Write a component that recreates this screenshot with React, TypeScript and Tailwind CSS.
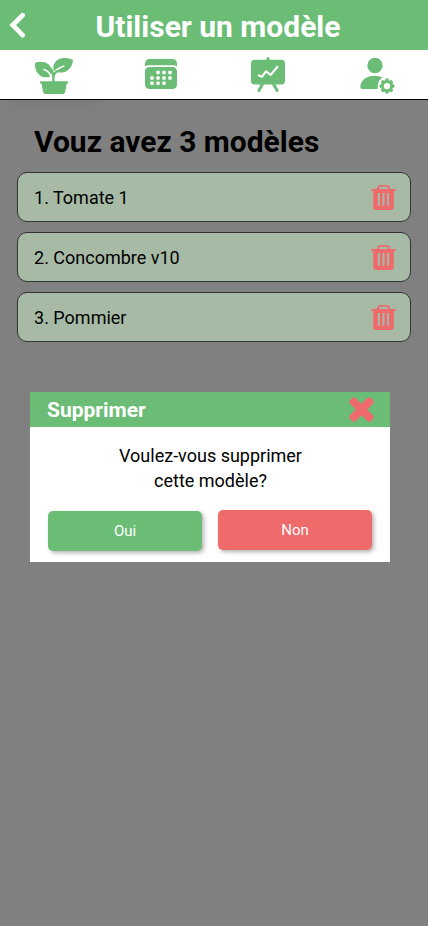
const GREEN = '#6bbd76';
const RED = '#ef6a6a';

function BackIcon() {
  return (
    <svg width="18" height="26" viewBox="0 0 18 26" fill="none" stroke="white" strokeWidth="4.8" strokeLinecap="round" strokeLinejoin="miter">
      <path d="M14.600 3.200 4.800 13.100 14.600 23.200" />
    </svg>
  );
}

function PlantIcon() {
  return (
    <svg width="38" height="38" viewBox="0 0 38 38">
      <path d="M6 25.300H32Q33.200 25.300 33.200 26.500T32 27.800H31.600L30.300 35.200Q29.800 38 27.300 38H10.900Q8.400 38 7.900 35.200L6.600 27.800H6Q5 27.800 5 26.500T6 25.300Z" fill={GREEN} />
      <path d="M0 8.500C0 6 1.500 6.300 3.500 6C10 5.200 16 8 16.600 14.500C16.900 17 16.500 19.500 15 20.700C12 21.500 8 21.900 5 19.500C1.500 17 0 13 0 8.500Z" fill={GREEN} />
      <path d="M18.700 14.500C16.800 7.500 22.500 2 29 2C32.500 2 34.500 2.600 37 3.400Q38.300 3.900 37.900 5.500C36.500 12 32.500 16.200 27 16.400C23.500 16.500 21.500 16.100 20 15.400Z" fill={GREEN} />
      <path d="M9 13.500C12.500 14.800 15 17.300 16 20.700M28.700 10.200C24.500 11.500 21.300 13.500 19.700 16.500" fill="none" stroke="white" strokeWidth="1.700" strokeLinecap="round" />
      <path d="M18.400 26V22C18.400 18 17.400 14.800 16 12.500M18.400 26V21.500C18.400 18.500 20.300 16.200 23 14.800" fill="none" stroke={GREEN} strokeWidth="2.400" />
    </svg>
  );
}

function CalendarIcon() {
  const dots = [[13, 13.500], [19, 13.500], [25, 13.500], [7, 19], [13, 19], [19, 19], [25, 19], [7, 24.200], [13, 24.200], [19, 24.200]];
  return (
    <svg width="32" height="30" viewBox="0 0 32 30" fill={GREEN}>
      <path d="M0 7.500V5Q0 0 5 0H27Q32 0 32 5V7.500Q30.500 6.200 28 6.200H4Q1.500 6.200 0 7.500Z" />
      <rect y="8" width="32" height="22" rx="4.500" />
      {dots.map(([x, y]) => (
        <rect key={`${x}-${y}`} x={x - 1.700} y={y - 1.700} width="3.400" height="3.400" rx="0.900" fill="white" />
      ))}
    </svg>
  );
}

function BoardIcon() {
  return (
    <svg width="34" height="36" viewBox="0 0 34 36" fill="none" strokeLinecap="round" strokeLinejoin="round">
      <rect y="2.800" width="34" height="24.700" rx="3.500" fill={GREEN} />
      <path d="M17 1.500V4M11.500 27 7.900 33.500M22.500 27 26.100 33.500" stroke={GREEN} strokeWidth="3" />
      <path d="M7.900 18.500 11 19.700 15 14.300 19.700 17.900 26.400 9.900" stroke="white" strokeWidth="2.200" />
    </svg>
  );
}

function UserSettingsIcon() {
  const teeth = [0, 45, 90, 135];
  return (
    <svg width="36" height="38" viewBox="0 0 36 38" fill={GREEN}>
      <circle cx="15" cy="8.500" r="7.700" />
      <path d="M0.300 30C0.300 24 6 18.800 14.500 18.800Q19.500 18.800 22.500 20.500Q17 24 17.700 32H2.500Q0.300 32 0.300 30Z" />
      {teeth.map((a) => (
        <rect key={a} x="25.300" y="21.600" width="3.400" height="15" rx="0.800" transform={`rotate(${a} 27 29.100)`} />
      ))}
      <circle cx="27" cy="29.100" r="6.200" />
      <circle cx="27" cy="29.100" r="3.200" fill="white" />
    </svg>
  );
}

function TrashIcon() {
  return (
    <svg className="mt-px" width="25" height="25" viewBox="0 0 25 25" fill="none">
      <path d="M0.200 4H24.800V6.100H22.800V22Q22.800 25 20 25H5Q2.200 25 2.200 22V6.100H0.200Z" fill={RED} />
      <path d="M7 5V3.500Q7 0.900 9.500 0.900H15.500Q18 0.900 18 3.500V5" stroke={RED} strokeWidth="1.800" />
      <path d="M7.900 8V20.800M17.100 8V20.800M12.500 8V20.800" stroke="#a6baa6" strokeWidth="2" />
    </svg>
  );
}

function CloseIcon() {
  return (
    <svg width="26" height="26" viewBox="0 0 26 26" fill={RED}>
      <rect x="-2.200" y="8.500" width="29.400" height="8" rx="2.500" transform="rotate(45 12.500 12.500)" />
      <rect x="-2.200" y="8.500" width="29.400" height="8" rx="2.500" transform="rotate(-45 12.500 12.500)" />
    </svg>
  );
}

const models = ['Tomate 1', 'Concombre v10', 'Pommier'];

export default function App() {
  return (
    <div className="relative h-[926px] w-[428px] overflow-hidden bg-[#808080] font-[Roboto,sans-serif] text-black">
      <header className="grid h-[50px] grid-cols-[36px_1fr_28px] items-center bg-[#6bbd76]">
        <button className="pl-[8px]" aria-label="Retour"><BackIcon /></button>
        <h1 className="pt-[3px] text-center text-[30px] leading-[40px] font-bold whitespace-nowrap text-white">Utiliser un modèle</h1>
      </header>
      <nav className="grid h-[50px] grid-cols-4 border-b border-black bg-white">
        <button className="flex justify-center pt-[6px] shadow-[0_14px_10px_-8px_rgba(0,0,0,0.05)]"><PlantIcon /></button>
        <button className="flex justify-center pt-[9px]"><CalendarIcon /></button>
        <button className="flex justify-center pt-[7px]"><BoardIcon /></button>
        <button className="flex justify-center pt-[7px] pl-[6px]"><UserSettingsIcon /></button>
      </nav>
      <main className="px-[17px] pt-[22px]">
        <h2 className="pl-[17px] text-[30px] leading-[40px] font-bold whitespace-nowrap">Vouz avez 3 modèles</h2>
        <ul className="mt-[10px] flex flex-col gap-[10px]">
          {models.map((name, i) => (
            <li key={name} className="flex h-[50px] items-center justify-between rounded-[10px] border border-[#333] bg-[#a6baa6] pr-[14px] pl-4 text-[18px]">
              <span>{i + 1}. {name}</span>
              <TrashIcon />
            </li>
          ))}
        </ul>
      </main>
      <section role="dialog" className="absolute top-[392px] left-[30px] h-[170px] w-[360px] bg-white">
        <div className="flex h-[35px] items-center justify-between bg-[#6bbd76] pr-[15px] pl-[17px]">
          <h3 className="text-[21px] leading-[30px] font-bold text-white">Supprimer</h3>
          <CloseIcon />
        </div>
        <p className="pt-4 pl-[1px] text-center text-[18px] leading-[25px]">Voulez-vous supprimer<br />cette modèle?</p>
        <div className="mt-[17px] flex gap-4 px-[18px] text-[15px] text-white">
          <button className="mt-px h-10 w-[154px] rounded-[5px] bg-[#6bbd76] shadow-[2px_2px_4px_rgba(0,0,0,0.3)]">Oui</button>
          <button className="h-10 w-[154px] rounded-[5px] bg-[#ef6a6a] shadow-[2px_2px_4px_rgba(0,0,0,0.3)]">Non</button>
        </div>
      </section>
    </div>
  );
}
